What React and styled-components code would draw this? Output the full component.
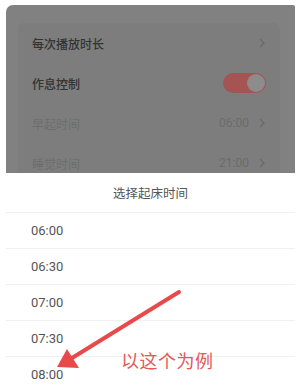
import React from "react";
import styled, { createGlobalStyle } from "styled-components";

const Global = createGlobalStyle`
  html, body {
    margin: 0;
    padding: 0;
    background: #ffffff;
    font-family: Roboto, "Noto Sans CJK SC", sans-serif;
  }
`;

const Screen = styled.div`
  position: relative;
  width: 300px;
  height: 391px;
  overflow: hidden;
  padding: 5px 5px 0 6px;
  box-sizing: border-box;
`;

const Dimmed = styled.div`
  height: 168px;
  background: #818181;
  border-top-left-radius: 7px;
  border-top-right-radius: 2px;
  padding: 18px 15px 0 12px;
  box-sizing: border-box;
  overflow: hidden;
`;

const Card = styled.div`
  background: #7d7d7d;
  border-radius: 6px;
  padding: 0 14px;
`;

const Row = styled.div`
  display: flex;
  align-items: center;
  height: 40px;
  font-size: 12px;
  font-weight: ${(p) => (p.$disabled ? 400 : 500)};
  color: ${(p) => (p.$disabled ? "#6d6d6d" : "#333333")};
`;

const Label = styled.span`
  flex: 1;
`;

const Value = styled.span`
  font-size: 12px;
  color: #6b6b6b;
  margin-right: 10px;
`;

const Chevron = styled.svg`
  width: 6px;
  height: 10px;
  margin-right: 1px;
`;

const Toggle = styled.div`
  width: 43px;
  height: 20px;
  border-radius: 10px;
  background: #a55454;
  display: flex;
  align-items: center;
  justify-content: flex-end;
  padding: 0 1px;
  box-sizing: border-box;
`;

const Knob = styled.div`
  width: 18px;
  height: 18px;
  border-radius: 50%;
  background: #8c8c8c;
`;

const Sheet = styled.div`
  background: #ffffff;
`;

const SheetTitle = styled.div`
  height: 40px;
  display: flex;
  align-items: center;
  justify-content: center;
  font-size: 12.5px;
  color: #555555;
  border-bottom: 1px solid #f0f0f0;
  box-sizing: border-box;
`;

const Option = styled.div`
  height: 36px;
  display: flex;
  align-items: center;
  padding-left: 25px;
  font-size: 13px;
  color: #555555;
  border-bottom: 1px solid #f0f0f0;
  box-sizing: border-box;
`;

const Annotation = styled.svg`
  position: absolute;
  left: 0;
  top: 0;
  width: 300px;
  height: 391px;
  pointer-events: none;
`;

const Note = styled.div`
  position: absolute;
  left: 121px;
  top: 347px;
  font-family: "Noto Sans CJK SC", sans-serif;
  font-size: 18px;
  color: #e45858;
  letter-spacing: 0.5px;
`;

const Arrow = () => (
  <Chevron viewBox="0 0 6 10">
    <path d="M1 1 L5 5 L1 9" fill="none" stroke="#6a6a6a" strokeWidth="1.3" />
  </Chevron>
);

const settings = [
  { label: "每次播放时长", type: "link" },
  { label: "作息控制", type: "toggle" },
  { label: "早起时间", value: "06:00", disabled: true },
  { label: "睡觉时间", value: "21:00", disabled: true },
];

const times = ["06:00", "06:30", "07:00", "07:30", "08:00"];

export default function App() {
  return (
    <>
      <Global />
      <Screen>
        <Dimmed>
          <Card>
            {settings.map((s) => (
              <Row key={s.label} $disabled={s.disabled}>
                <Label>{s.label}</Label>
                {s.value && <Value>{s.value}</Value>}
                {s.type === "toggle" ? (
                  <Toggle>
                    <Knob />
                  </Toggle>
                ) : (
                  <Arrow />
                )}
              </Row>
            ))}
          </Card>
        </Dimmed>
        <Sheet>
          <SheetTitle>选择起床时间</SheetTitle>
          {times.map((t) => (
            <Option key={t}>{t}</Option>
          ))}
        </Sheet>
        <Annotation viewBox="0 0 300 391">
          <line x1="179" y1="292" x2="72" y2="358" stroke="#e84a4c" strokeWidth="4" strokeLinecap="round" />
          <polygon points="57,367 67,349 79,368" fill="#e84a4c" />
        </Annotation>
        <Note>以这个为例</Note>
      </Screen>
    </>
  );
}
